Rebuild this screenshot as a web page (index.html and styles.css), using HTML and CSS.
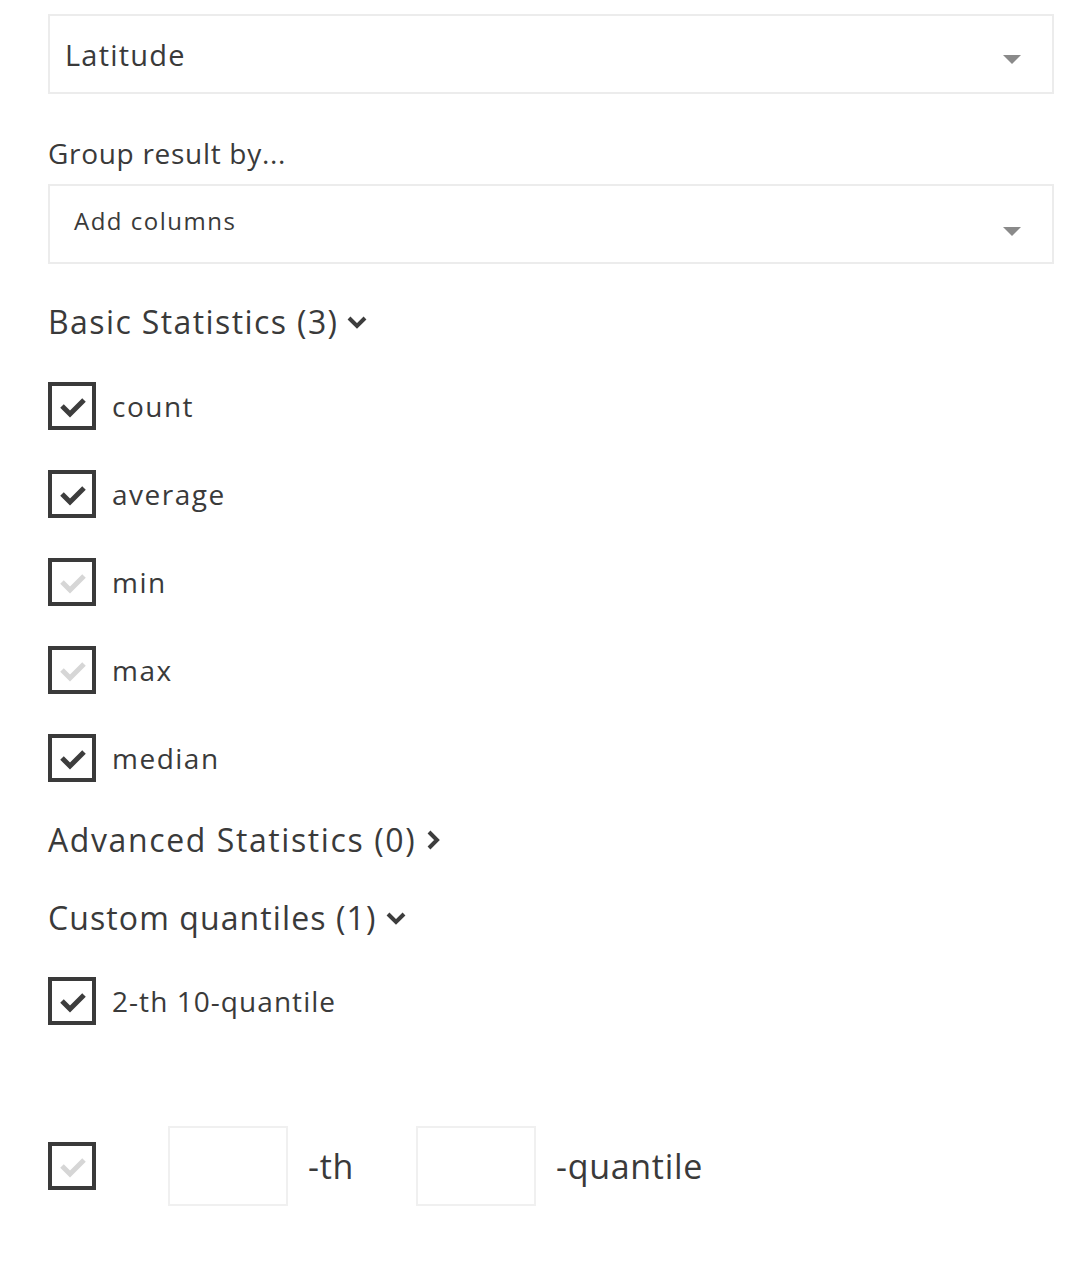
FILE: index.html
```html
<!DOCTYPE html>
<html>
<head>
<meta charset="utf-8">
<link rel="stylesheet" href="styles.css">
</head>
<body>
<div class="panel">
  <div class="select select-main">
    <span class="select-text">Latitude</span>
    <span class="caret"></span>
  </div>

  <div class="label">Group result by...</div>
  <div class="select select-cols">
    <span class="select-text small">Add columns</span>
    <span class="caret caret-low"></span>
  </div>

  <div class="section-head head-basic">
    <span>Basic Statistics (3)</span>
    <svg class="chev" width="22" height="14" viewBox="0 0 22 14"><path d="M3 3 L11 11 L19 3" fill="none" stroke="#3d3d3d" stroke-width="4"/></svg>
  </div>

  <div class="checks">
    <div class="check-row"><span class="box"><svg viewBox="0 0 40 40" width="40" height="40"><path d="M10 20 L18 28 L32 14" fill="none" stroke="#3d3d3d" stroke-width="5"/></svg></span><span class="check-label">count</span></div>
    <div class="check-row"><span class="box"><svg viewBox="0 0 40 40" width="40" height="40"><path d="M10 20 L18 28 L32 14" fill="none" stroke="#3d3d3d" stroke-width="5"/></svg></span><span class="check-label">average</span></div>
    <div class="check-row"><span class="box"><svg viewBox="0 0 40 40" width="40" height="40"><path d="M10 20 L18 28 L32 14" fill="none" stroke="#d6d6d6" stroke-width="5"/></svg></span><span class="check-label">min</span></div>
    <div class="check-row"><span class="box"><svg viewBox="0 0 40 40" width="40" height="40"><path d="M10 20 L18 28 L32 14" fill="none" stroke="#d6d6d6" stroke-width="5"/></svg></span><span class="check-label">max</span></div>
    <div class="check-row"><span class="box"><svg viewBox="0 0 40 40" width="40" height="40"><path d="M10 20 L18 28 L32 14" fill="none" stroke="#3d3d3d" stroke-width="5"/></svg></span><span class="check-label">median</span></div>
  </div>

  <div class="section-head head-adv">
    <span>Advanced Statistics (0)</span>
    <svg class="chev-r" width="14" height="22" viewBox="0 0 14 22"><path d="M3 3 L11 11 L3 19" fill="none" stroke="#3d3d3d" stroke-width="4"/></svg>
  </div>

  <div class="section-head head-custom">
    <span>Custom quantiles (1)</span>
    <svg class="chev" width="22" height="14" viewBox="0 0 22 14"><path d="M3 3 L11 11 L19 3" fill="none" stroke="#3d3d3d" stroke-width="4"/></svg>
  </div>

  <div class="checks checks-custom">
    <div class="check-row"><span class="box"><svg viewBox="0 0 40 40" width="40" height="40"><path d="M10 20 L18 28 L32 14" fill="none" stroke="#3d3d3d" stroke-width="5"/></svg></span><span class="check-label narrow">2-th 10-quantile</span></div>
  </div>

  <div class="new-quantile">
    <span class="box"><svg viewBox="0 0 40 40" width="40" height="40"><path d="M10 20 L18 28 L32 14" fill="none" stroke="#d6d6d6" stroke-width="5"/></svg></span>
    <span class="num-input first"></span>
    <span class="q-text">-th</span>
    <span class="num-input second"></span>
    <span class="q-text">-quantile</span>
  </div>
</div>
</body>
</html>
```

FILE: styles.css
```css
html, body {
  margin: 0;
  padding: 0;
  background: #ffffff;
}
body {
  font-family: "Open Sans", "Liberation Sans", sans-serif;
  color: #3a3a3a;
}
.panel {
  width: 1006px;
  padding: 14px 0 0 48px;
}
.select {
  box-sizing: border-box;
  height: 80px;
  border: 2px solid #ececec;
  display: flex;
  align-items: center;
  justify-content: space-between;
  padding: 0 31px 0 15px;
}
.select-text {
  font-size: 29px;
  letter-spacing: 1.2px;
}
.select-text.small {
  font-size: 24px;
  padding-left: 9px;
  letter-spacing: 1.5px;
  margin-top: -8px;
}
.caret {
  width: 0;
  height: 0;
  border-left: 9px solid transparent;
  border-right: 9px solid transparent;
  border-top: 9px solid #8a8a8a;
  margin-top: 10px;
}
.caret-low {
  margin-top: 15px;
}
.label {
  font-size: 28px;
  letter-spacing: 0.7px;
  line-height: 40px;
  margin-top: 39px;
  margin-bottom: 11px;
}
.section-head {
  display: flex;
  align-items: center;
  font-size: 32px;
  letter-spacing: 1.4px;
  line-height: 44px;
}
.head-basic {
  margin-top: 36px;
}
.chev {
  margin-left: 8px;
}
.chev-r {
  margin-left: 10px;
}
.checks {
  display: flex;
  flex-direction: column;
  gap: 40px;
  margin-top: 38px;
}
.check-row {
  display: flex;
  align-items: center;
  height: 48px;
}
.box {
  box-sizing: border-box;
  width: 48px;
  height: 48px;
  border: 4px solid #3a3a3a;
  display: flex;
  align-items: center;
  justify-content: center;
  flex: none;
}
.check-label {
  font-size: 28px;
  letter-spacing: 1.5px;
  margin-left: 16px;
}
.check-label.narrow {
  letter-spacing: 1.05px;
}
.head-adv {
  margin-top: 36px;
}
.head-adv.section-head {
  letter-spacing: 1.6px;
}
.head-custom {
  margin-top: 34px;
}
.head-custom.section-head {
  letter-spacing: 1.1px;
}
.checks-custom {
  margin-top: 37px;
}
.new-quantile {
  display: flex;
  align-items: center;
  margin-top: 101px;
}
.num-input {
  box-sizing: border-box;
  width: 120px;
  height: 80px;
  border: 2px solid #f0f0f0;
}
.num-input.first {
  margin-left: 72px;
}
.num-input.second {
  margin-left: 62px;
}
.q-text {
  font-size: 34px;
  letter-spacing: 0.7px;
  margin-left: 20px;
}
```
